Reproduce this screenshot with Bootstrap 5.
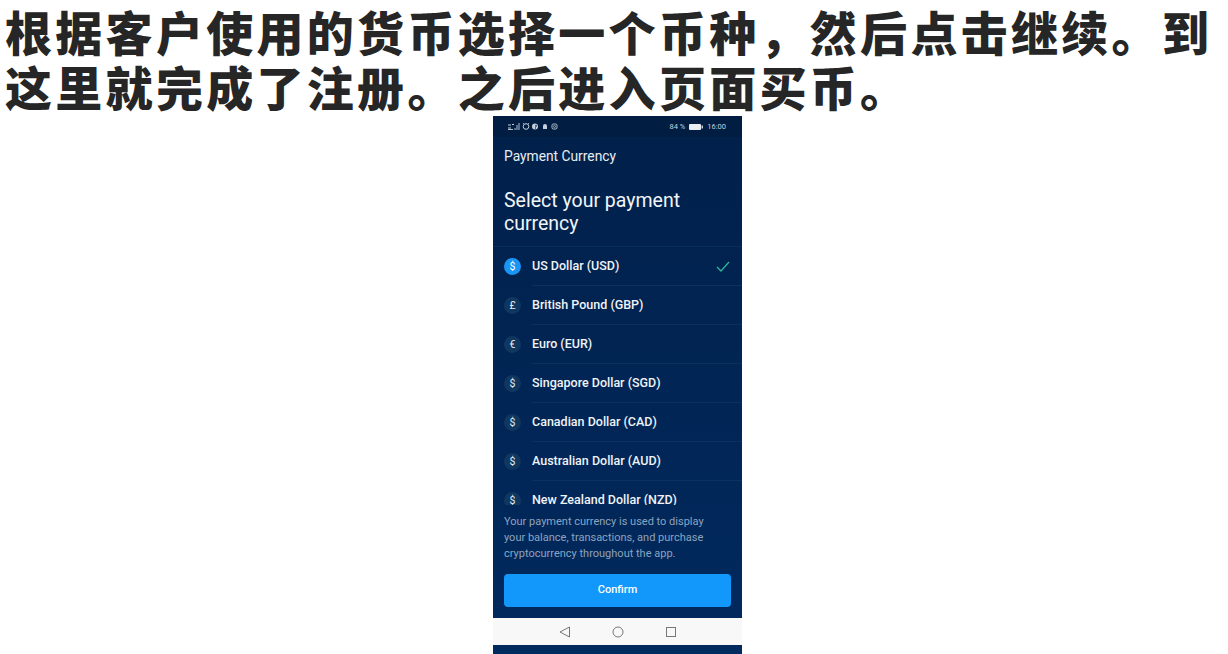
<!DOCTYPE html>
<html lang="zh">
<head>
<meta charset="utf-8">
<title>Payment Currency</title>
<link rel="stylesheet" href="https://cdn.jsdelivr.net/npm/bootstrap@5.3.0/dist/css/bootstrap.min.css">
<style>
html,body{margin:0;height:654px;overflow:hidden;background:#fff}
.headline{font-family:"Noto Sans CJK SC",sans-serif;font-weight:900;font-size:47px;letter-spacing:3.3px;line-height:55px;color:#262626;margin:0;padding:3px 0 0 5px;height:116px;white-space:nowrap;overflow:hidden}
.stage{padding-left:493px}
.phone{width:249px;height:538px;font-family:Roboto,"Liberation Sans",sans-serif;color:#fff;background:linear-gradient(180deg,#01204a 0%,#012a5f 100%)}
.statusbar{height:21px;background:#011d42;padding:0 16px 0 15px;font-size:7.5px;color:#c5d0dc}
.appbar{height:38px;padding-left:11px;font-size:13.8px;color:#e8edf3}
.pickhead{font-size:19.5px;line-height:23px;font-weight:400;margin:0;padding:14px 11px 0;height:72px;border-bottom:1px solid #0a3058;color:#f2f5f8}
.curlist{height:258px;overflow:hidden}
.curitem{height:39px;padding-left:11px;gap:11px}
.curico{width:17px;height:17px;border-radius:50%;background:#103760;color:#e6ecf3;font-size:10.5px;flex:none}
.curico-on{background:#1a94f5;color:#fff}
.curbody{height:39px;border-bottom:1px solid #0a3160;padding-right:12px;font-size:12.5px;font-weight:500;color:#f0f3f7}
.note{height:57px;padding:9px 30px 0 11px;font-size:11px;line-height:16px;color:#8ea3bf;margin:0}
.confirm{width:227px;height:33px;margin:12px 11px 0;background:#1298fb;border:0;border-radius:4px;color:#fff;font-size:11px;font-weight:500;padding:0}
.confirm:hover{background:#1298fb;color:#fff}
.sysnav{height:27px;background:#f8f8f8;gap:41px;margin-top:11px}
</style>
</head>
<body>
<h1 class="headline">根据客户使用的货币选择一个币种，然后点击继续。到<br>这里就完成了注册。之后进入页面买币。</h1>
<div class="stage d-flex">
<div class="phone d-flex flex-column">
  <div class="statusbar d-flex align-items-center justify-content-between">
    <svg width="50" height="9" viewBox="0 0 50 9" fill="none" stroke="#c5d0dc">
      <path d="M0 3h3M0 6h3M4 2.5h2" stroke-width="1"/>
      <path d="M0 7.5h5M7 8V6M9 8V3M11 8V1" stroke-width=".9"/>
      <circle cx="18" cy="4.5" r="2.8" stroke-width="1"/>
      <path d="M16 1l-1 1M20 1l1 1" stroke-width=".8"/>
      <circle cx="27" cy="4.5" r="3" fill="#c5d0dc" stroke="none"/>
      <path d="M27.500 7V4.500H28.500V3.500H27.500V3H28.500" stroke="#011d42" stroke-width=".6"/>
      <path d="M35 7V4a2 2 0 0 1 4 0v3h1H34z" fill="#c5d0dc" stroke="none"/>
      <rect x="44" y="2" width="5" height="5" rx="1.4" stroke-width=".9"/>
      <circle cx="46.500" cy="4.500" r="1" stroke-width=".7"/>
    </svg>
    <span class="d-flex align-items-center gap-1"><span>84 %</span>
      <svg width="14" height="6" viewBox="0 0 14 6"><rect width="12" height="6" rx="1" fill="#e8edf3"/><rect x="12.500" y="1.500" width="1.500" height="3" fill="#c5d0dc"/></svg>
      <span>16:00</span></span>
  </div>
  <div class="appbar d-flex align-items-center">Payment Currency</div>
  <h2 class="pickhead">Select your payment currency</h2>
  <div class="curlist">
    <div class="curitem d-flex align-items-center"><span class="curico curico-on d-flex align-items-center justify-content-center">$</span><div class="curbody flex-grow-1 d-flex align-items-center justify-content-between">US Dollar (USD)
      <svg width="14" height="11" viewBox="0 0 14 11" fill="none" stroke="#2bb59a" stroke-width="1.300"><path d="M1 6l4 4 8-9"/></svg></div></div>
    <div class="curitem d-flex align-items-center"><span class="curico d-flex align-items-center justify-content-center">£</span><div class="curbody flex-grow-1 d-flex align-items-center">British Pound (GBP)</div></div>
    <div class="curitem d-flex align-items-center"><span class="curico d-flex align-items-center justify-content-center">€</span><div class="curbody flex-grow-1 d-flex align-items-center">Euro (EUR)</div></div>
    <div class="curitem d-flex align-items-center"><span class="curico d-flex align-items-center justify-content-center">$</span><div class="curbody flex-grow-1 d-flex align-items-center">Singapore Dollar (SGD)</div></div>
    <div class="curitem d-flex align-items-center"><span class="curico d-flex align-items-center justify-content-center">$</span><div class="curbody flex-grow-1 d-flex align-items-center">Canadian Dollar (CAD)</div></div>
    <div class="curitem d-flex align-items-center"><span class="curico d-flex align-items-center justify-content-center">$</span><div class="curbody flex-grow-1 d-flex align-items-center">Australian Dollar (AUD)</div></div>
    <div class="curitem d-flex align-items-center"><span class="curico d-flex align-items-center justify-content-center">$</span><div class="curbody flex-grow-1 d-flex align-items-center">New Zealand Dollar (NZD)</div></div>
  </div>
  <p class="note">Your payment currency is used to display your balance, transactions, and purchase cryptocurrency throughout the app.</p>
  <button class="btn confirm" type="button">Confirm</button>
  <div class="sysnav d-flex align-items-center justify-content-center">
    <svg width="12" height="12" viewBox="0 0 12 12" fill="none" stroke="#777" stroke-width="1"><path d="M10.500 1v10L1 6z"/></svg>
    <svg width="12" height="12" viewBox="0 0 12 12" fill="none" stroke="#777" stroke-width="1"><circle cx="6" cy="6" r="5"/></svg>
    <svg width="12" height="12" viewBox="0 0 12 12" fill="none" stroke="#777" stroke-width="1"><rect x="1.500" y="1.500" width="9" height="9"/></svg>
  </div>
</div>
</div>
<script src="https://cdn.jsdelivr.net/npm/bootstrap@5.3.0/dist/js/bootstrap.bundle.min.js"></script>
</body>
</html>
